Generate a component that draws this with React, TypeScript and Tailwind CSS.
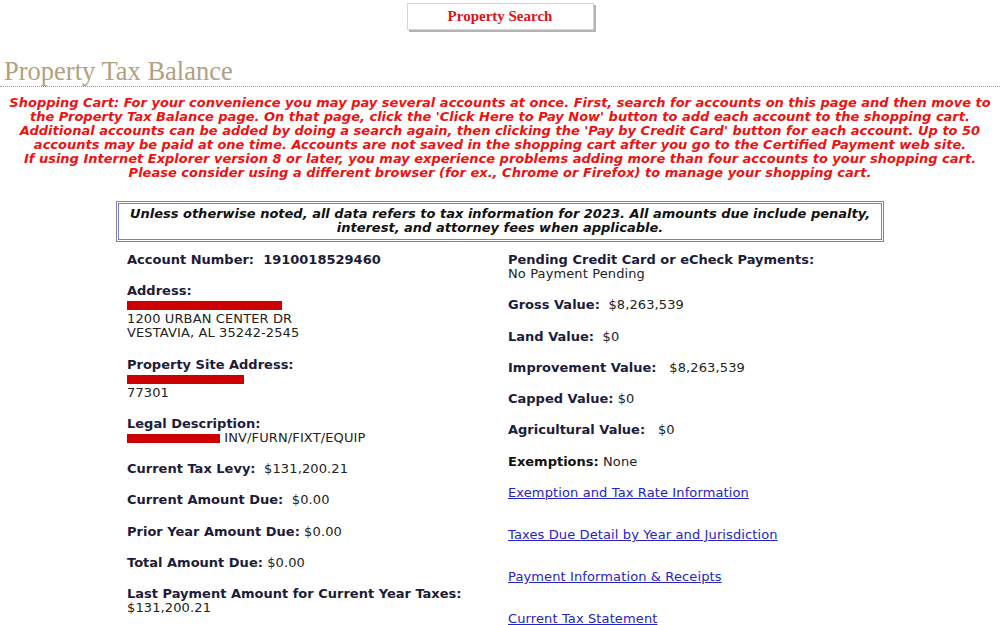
import React from 'react';

// Строки предупреждения о корзине — переносы как в оригинале
const cartLines = [
  'Shopping Cart: For your convenience you may pay several accounts at once. First, search for accounts on this page and then move to',
  "the Property Tax Balance page. On that page, click the 'Click Here to Pay Now' button to add each account to the shopping cart.",
  "Additional accounts can be added by doing a search again, then clicking the 'Pay by Credit Card' button for each account. Up to 50",
  'accounts may be paid at one time. Accounts are not saved in the shopping cart after you go to the Certified Payment web site.',
  'If using Internet Explorer version 8 or later, you may experience problems adding more than four accounts to your shopping cart.',
  'Please consider using a different browser (for ex., Chrome or Firefox) to manage your shopping cart.',
];

const Bar: React.FC<{ w: string }> = ({ w }) => (
  <span className={`inline-block h-[9px] bg-[#cc0000] align-[-1px] ${w}`} />
);

const Label: React.FC<{ children: React.ReactNode }> = ({ children }) => (
  <span className="font-bold text-[#1c1c3a] tracking-normal">{children}</span>
);

const Row: React.FC<{ label: string; value?: string; gap?: number; bold?: boolean }> = ({ label, value, gap = 1, bold }) => (
  <div className="mb-[17.3px] whitespace-pre">
    <Label>{label}</Label>
    {value !== undefined && (
      <span className={bold ? 'font-bold text-[#1c1c3a] tracking-normal' : ''}>{' '.repeat(gap) + value}</span>
    )}
  </div>
);

const links = [
  'Exemption and Tax Rate Information',
  'Taxes Due Detail by Year and Jurisdiction',
  'Payment Information & Receipts',
  'Current Tax Statement',
];

export default function App() {
  return (
    <div className="w-[1000px] h-[625px] overflow-hidden bg-white text-[#222] font-['DejaVu_Sans',sans-serif] text-[13px] leading-[14px]">
      {/* Кнопка поиска */}
      <div className="flex justify-center pt-[3px]">
        <div className="w-[187px] h-[27px] flex items-center justify-center pb-[2px] bg-white border border-[#d4d4d4] shadow-[2px_2px_0_#b4b4b4] font-['Liberation_Serif',serif] font-bold text-[15px] text-[#e0101a]">
          Property Search
        </div>
      </div>

      {/* Заголовок */}
      <div className="mt-[27px] pl-[4px] border-b border-dotted border-[#9a9a9a] pb-[1px]">
        <h1 className="font-['Liberation_Serif',serif] text-[26.5px] leading-[28px] text-[#b3a082]">Property Tax Balance</h1>
      </div>

      {/* Корзина */}
      <div className="mt-[9px] text-center font-bold italic text-[#ee1111] text-[13px] leading-[14px]">
        {cartLines.map((l) => (
          <div key={l} className="whitespace-nowrap">{l}</div>
        ))}
      </div>

      {/* Примечание */}
      <div className="mx-[116px] mt-[21px] border-[3px] border-double border-[#8080b8] pt-[3px] pb-[4px] text-center font-bold italic text-[#111] text-[13px]">
        <div>Unless otherwise noted, all data refers to tax information for 2023. All amounts due include penalty,</div>
        <div>interest, and attorney fees when applicable.</div>
      </div>

      {/* Данные по счёту */}
      <div className="ml-[127px] mt-[11px] flex tracking-[0.12px]">
        <div className="w-[381px]">
          <Row label="Account Number:" value="1910018529460" gap={2} bold />
          <div className="mb-[17.3px]">
            <Label>Address:</Label>
            <div className="h-[14px]"><Bar w="w-[155px]" /></div>
            <div>1200 URBAN CENTER DR</div>
            <div>VESTAVIA, AL 35242-2545</div>
          </div>
          <div className="mb-[17.3px]">
            <Label>Property Site Address:</Label>
            <div className="h-[14px]"><Bar w="w-[117px]" /></div>
            <div>77301</div>
          </div>
          <div className="mb-[17.3px]">
            <Label>Legal Description:</Label>
            <div className="whitespace-pre"><Bar w="w-[93px]" /> INV/FURN/FIXT/EQUIP</div>
          </div>
          <Row label="Current Tax Levy:" value="$131,200.21" gap={2} />
          <Row label="Current Amount Due:" value="$0.00" gap={2} />
          <Row label="Prior Year Amount Due:" value="$0.00" />
          <Row label="Total Amount Due:" value="$0.00" />
          <div>
            <Label>Last Payment Amount for Current Year Taxes:</Label>
            <div>$131,200.21</div>
          </div>
        </div>

        <div className="flex-1">
          <div className="mb-[17.3px]">
            <Label>Pending Credit Card or eCheck Payments:</Label>
            <div>No Payment Pending</div>
          </div>
          <Row label="Gross Value:" value="$8,263,539" gap={2} />
          <Row label="Land Value:" value="$0" gap={2} />
          <Row label="Improvement Value:" value="$8,263,539" gap={3} />
          <Row label="Capped Value:" value="$0" />
          <Row label="Agricultural Value:" value="$0" gap={3} />
          <div className="mb-[17.3px]">
            <span className="font-bold text-[#111] tracking-normal">Exemptions:</span> None
          </div>
          {links.map((l) => (
            <div key={l} className="mb-[28px]">
              <a href="#" className="text-[#2323c8] underline">{l}</a>
            </div>
          ))}
        </div>
      </div>
    </div>
  );
}
